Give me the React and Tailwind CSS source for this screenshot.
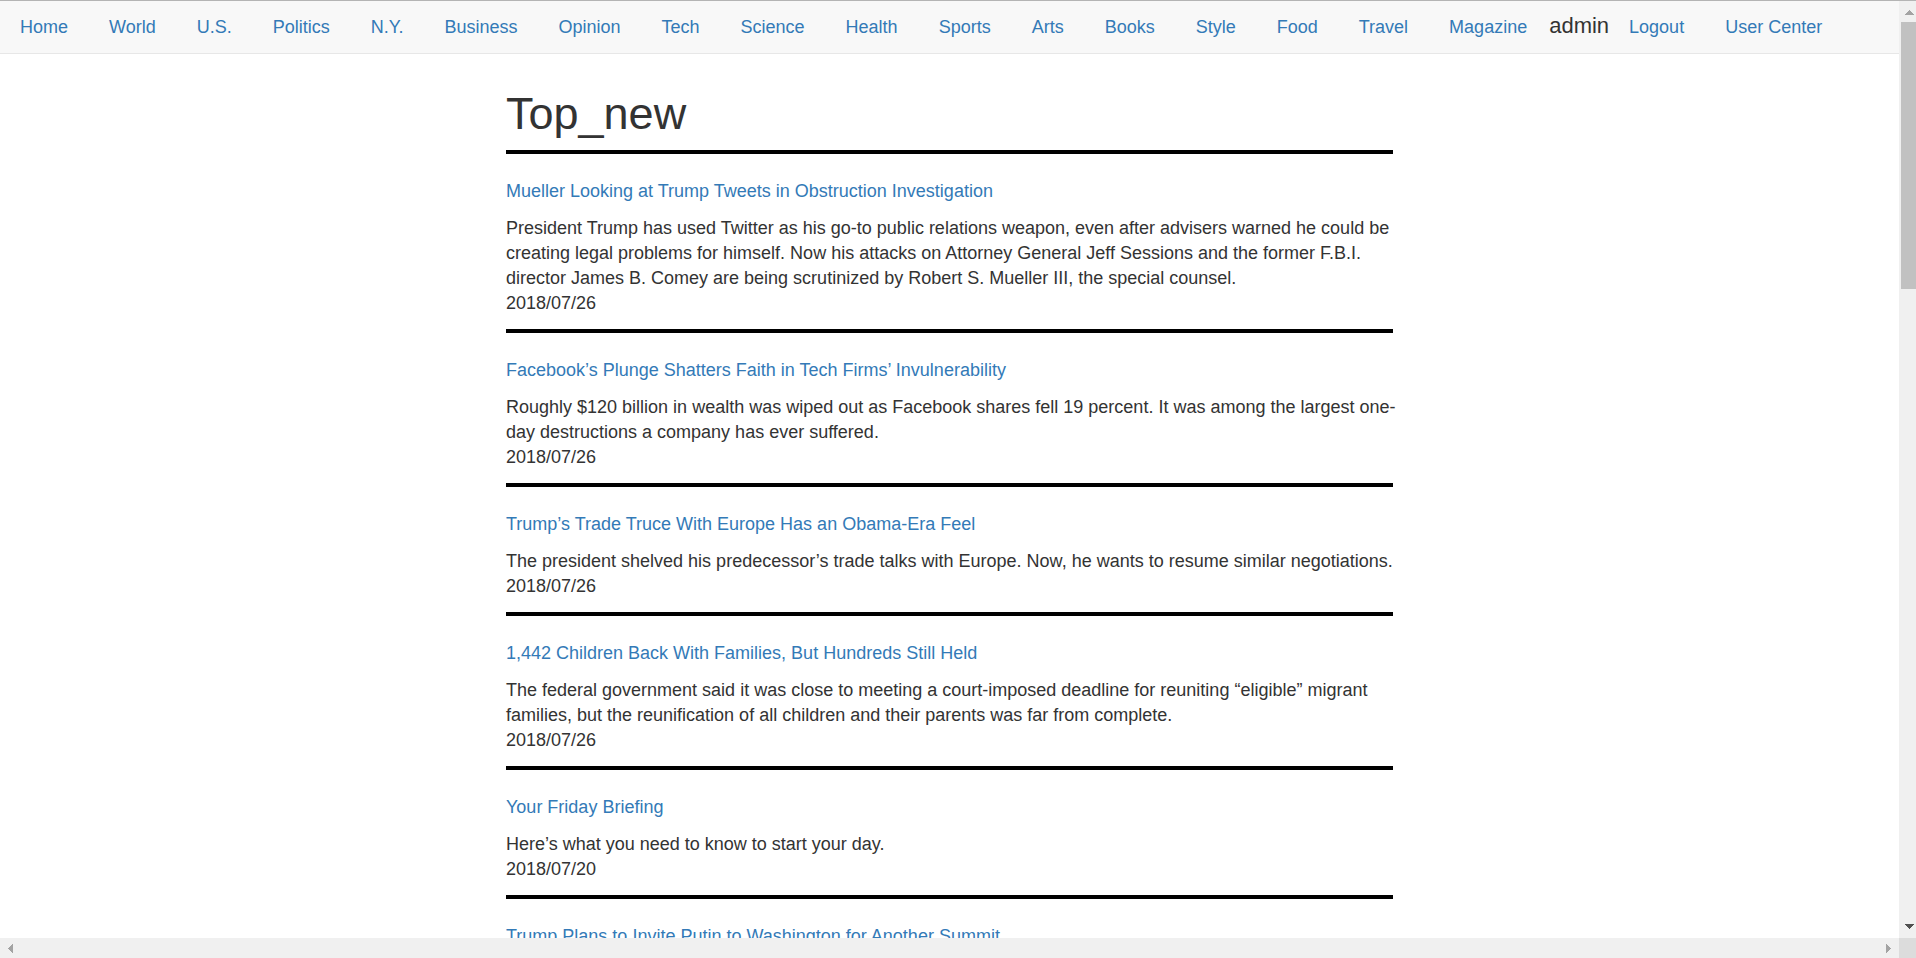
const sections = [
  'Home', 'World', 'U.S.', 'Politics', 'N.Y.', 'Business', 'Opinion', 'Tech', 'Science',
  'Health', 'Sports', 'Arts', 'Books', 'Style', 'Food', 'Travel', 'Magazine',
];

const articles = [
  {
    title: 'Mueller Looking at Trump Tweets in Obstruction Investigation',
    summary:
      'President Trump has used Twitter as his go-to public relations weapon, even after advisers warned he could be creating legal problems for himself. Now his attacks on Attorney General Jeff Sessions and the former F.B.I. director James B. Comey are being scrutinized by Robert S. Mueller III, the special counsel.',
    date: '2018/07/26',
  },
  {
    title: 'Facebook’s Plunge Shatters Faith in Tech Firms’ Invulnerability',
    summary:
      'Roughly $120 billion in wealth was wiped out as Facebook shares fell 19 percent. It was among the largest one-day destructions a company has ever suffered.',
    date: '2018/07/26',
  },
  {
    title: 'Trump’s Trade Truce With Europe Has an Obama-Era Feel',
    summary:
      'The president shelved his predecessor’s trade talks with Europe. Now, he wants to resume similar negotiations.',
    date: '2018/07/26',
  },
  {
    title: '1,442 Children Back With Families, But Hundreds Still Held',
    summary:
      'The federal government said it was close to meeting a court-imposed deadline for reuniting “eligible” migrant families, but the reunification of all children and their parents was far from complete.',
    date: '2018/07/26',
  },
  {
    title: 'Your Friday Briefing',
    summary: 'Here’s what you need to know to start your day.',
    date: '2018/07/20',
  },
  { title: 'Trump Plans to Invite Putin to Washington for Another Summit' },
];

function NavLink({ children }) {
  return (
    <a href="#" className="text-[#337ab7] hover:text-[#23527c]">
      {children}
    </a>
  );
}

function Navbar() {
  return (
    <nav className="flex h-[53px] shrink-0 items-baseline border-b border-[#e7e7e7] bg-[#f8f8f8] pt-3 pl-5 leading-[25px] whitespace-nowrap">
      <ul className="flex gap-[41px]">
        {sections.map((name) => (
          <li key={name}>
            <NavLink>{name}</NavLink>
          </li>
        ))}
      </ul>
      <span className="ml-[22px] text-[22px]">admin</span>
      <ul className="ml-5 flex gap-[41px]">
        <li><NavLink>Logout</NavLink></li>
        <li><NavLink>User Center</NavLink></li>
      </ul>
    </nav>
  );
}

function Article({ title, summary, date }) {
  return (
    <article className="border-t-4 border-black pt-[25px] pb-[13px] leading-[25px]">
      <h2 className="mb-3">
        <NavLink>{title}</NavLink>
      </h2>
      {summary && <p className="-mr-2">{summary}</p>}
      {date && <p>{date}</p>}
    </article>
  );
}

export default function App() {
  return (
    <div className="flex h-screen flex-col overflow-hidden border-t border-[#b4b4b4] bg-white font-['Liberation_Sans',Arial,sans-serif] text-[18px] text-[#333333]">
      <div className="flex min-h-0 flex-1">
        <div className="flex min-w-0 flex-1 flex-col overflow-hidden">
          <Navbar />
          <main className="mx-auto w-full max-w-[887px] pt-[35px]">
            <h1 className="mb-3 text-[45px] leading-[49px]">Top_new</h1>
            {articles.map((article) => (
              <Article key={article.title} {...article} />
            ))}
          </main>
        </div>
        <div className="flex w-[17px] shrink-0 flex-col bg-[#f0f0f0] pl-0.5" aria-hidden="true">
          <svg className="h-[21px] w-[15px] shrink-0" viewBox="0 0 15 21" shapeRendering="crispEdges">
            <path d="M4 14h9L8.500 9z" fill="#a3a3a3" />
          </svg>
          <div className="flex-1">
            <div className="h-[267px] bg-[#c1c1c1]" />
          </div>
          <svg className="h-[21px] w-[15px] shrink-0" viewBox="0 0 15 21" shapeRendering="crispEdges">
            <path d="M4 7h9l-4.500 5z" fill="#505050" />
          </svg>
        </div>
      </div>
      <div className="flex h-5 shrink-0 bg-[#f0f0f0]" aria-hidden="true">
        <svg className="h-5 w-5" viewBox="0 0 20 20" shapeRendering="crispEdges">
          <path d="M13 6v9L8 10.500z" fill="#a3a3a3" />
        </svg>
        <div className="flex-1" />
        <svg className="h-5 w-5" viewBox="0 0 20 20" shapeRendering="crispEdges">
          <path d="M7 6v9l5-4.500z" fill="#a3a3a3" />
        </svg>
        <div className="w-[17px] bg-[#dcdcdc]" />
      </div>
    </div>
  );
}
